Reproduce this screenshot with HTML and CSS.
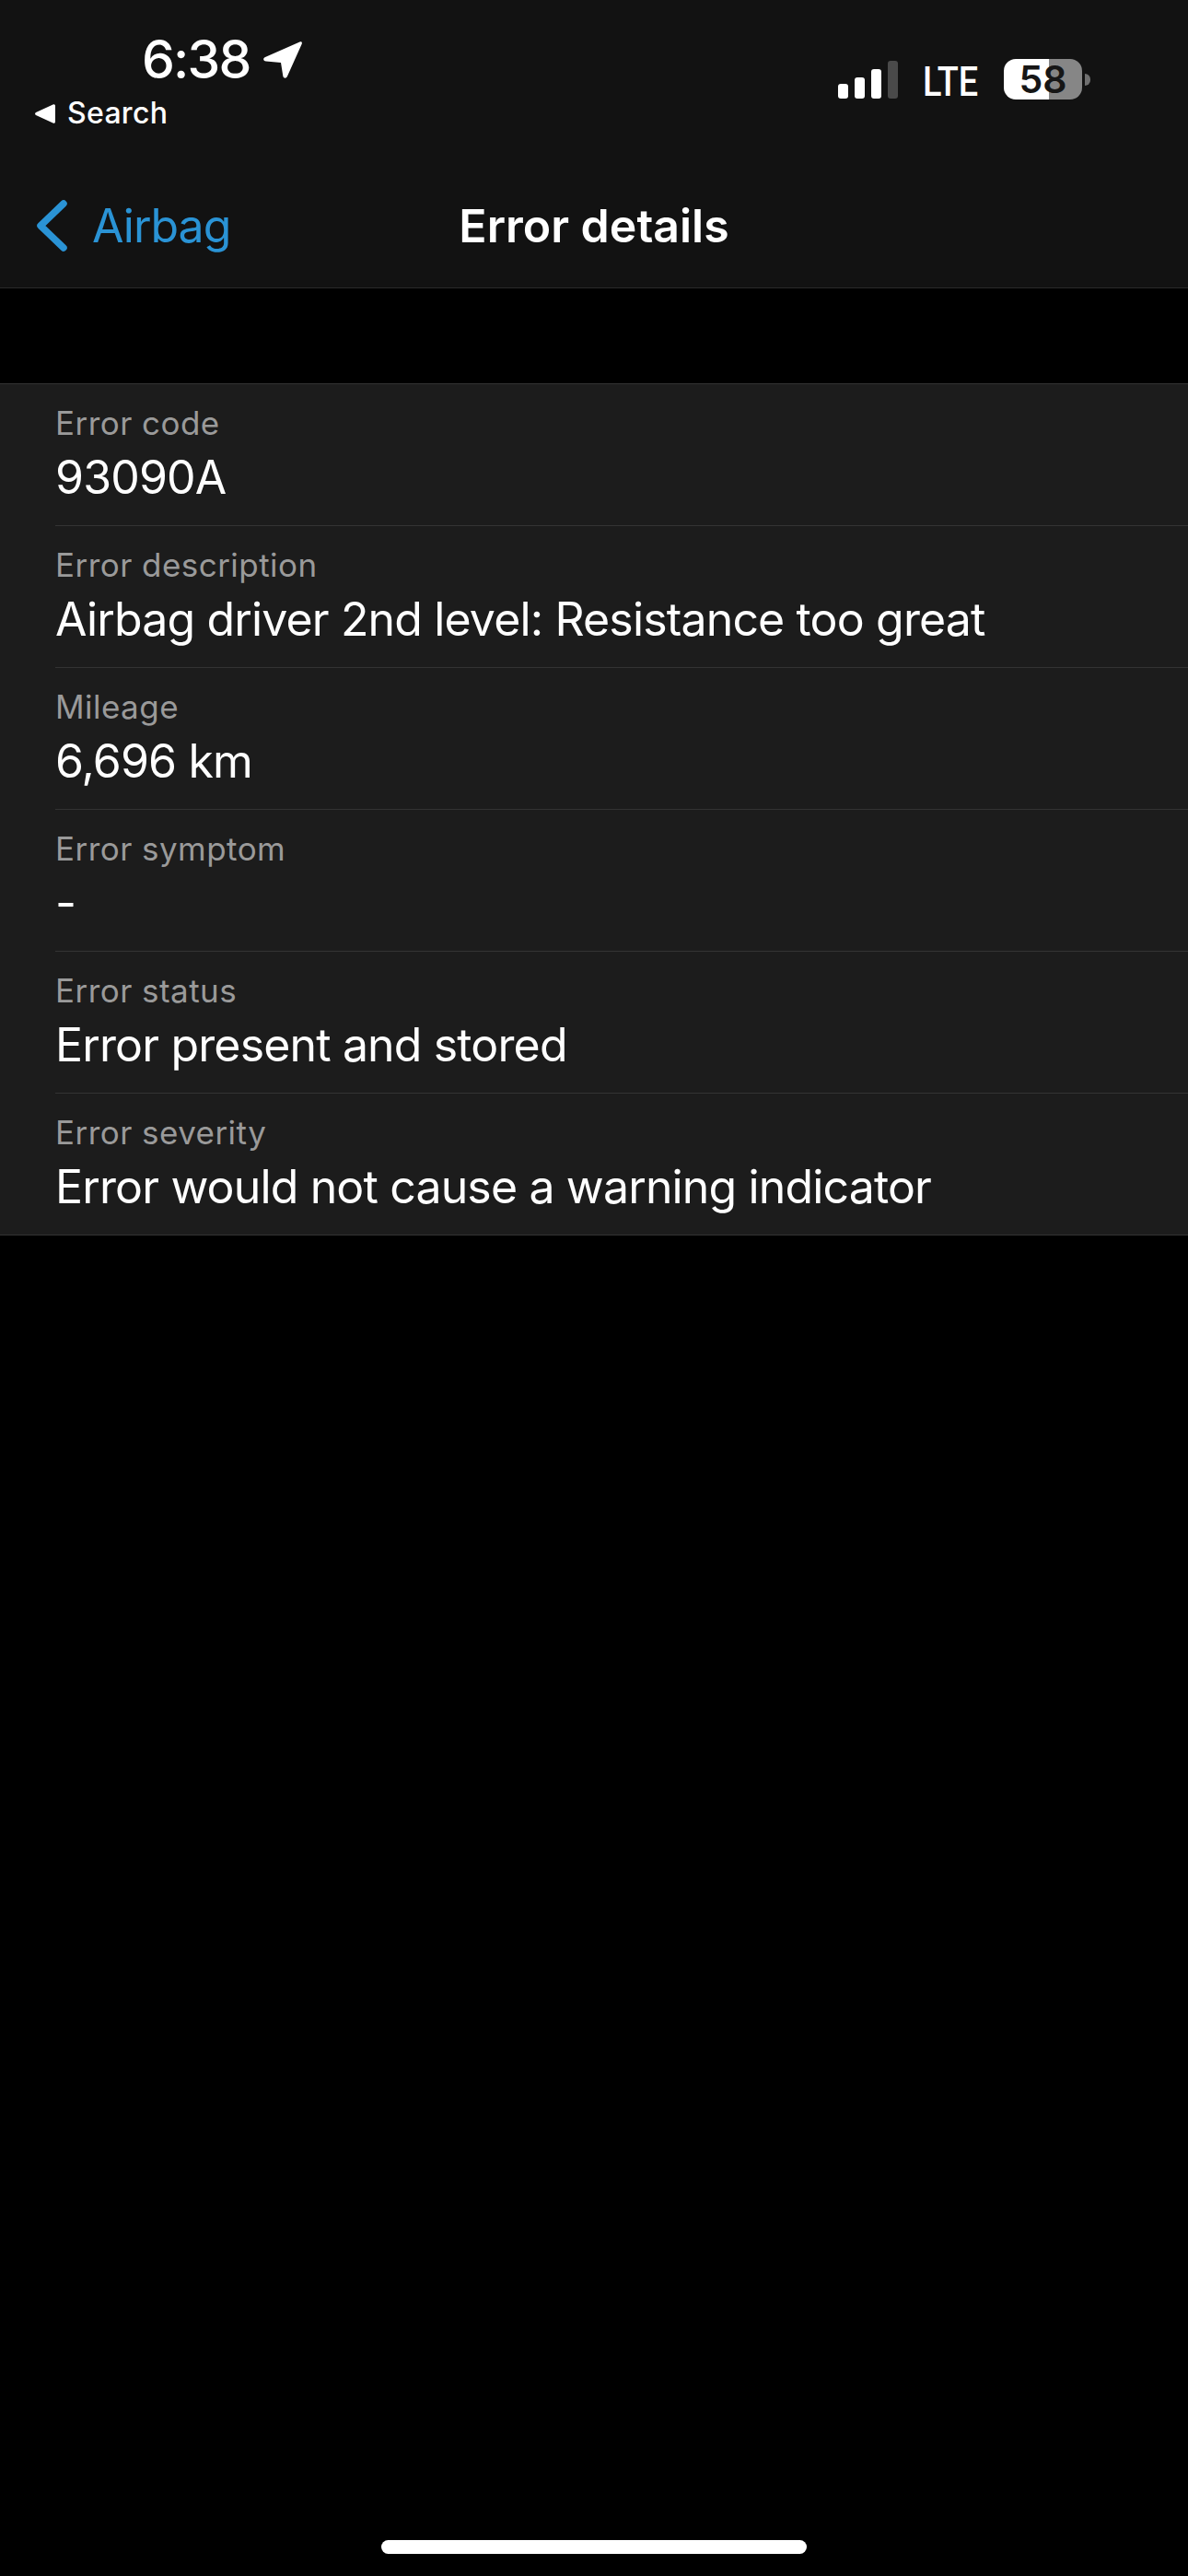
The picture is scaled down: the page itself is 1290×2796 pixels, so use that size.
FILE: index.html
```html
<!DOCTYPE html>
<html lang="en">
<head>
  <meta charset="UTF-8" />
  <meta name="viewport" content="width=device-width, initial-scale=1.0"/>
  <title>Error details</title>
  <link rel="stylesheet" href="styles.css">
</head>
<body>
  <header class="header">
    <div class="status-bar">
      <div class="status-left">
        <div class="time-row">
          <span class="time">6:38</span>
          <svg class="location-icon" viewBox="0 0 42 40" width="42" height="40">
            <path d="M39.5 0.5 C41.5 -0.2 42.3 1 41.7 2.8 L26 37.8 C25 40.4 21.8 40.4 21.3 37.6 L19 23 L2.8 21.6 C-0.3 21.2 -0.8 18.2 2 17 Z" fill="#fff"/>
          </svg>
        </div>
        <div class="search-row">
          <svg class="search-back" viewBox="0 0 22 21" width="22" height="21">
            <path d="M19.5 0.4 C21 -0.3 22 0.5 22 2 L22 19 C22 20.5 21 21.3 19.5 20.6 L1 12 C-0.3 11.3 -0.3 9.7 1 9 Z" fill="#fff"/>
          </svg>
          <span class="search-text">Search</span>
        </div>
      </div>
      <div class="status-right">
        <div class="signal">
          <span class="bar bar-1"></span>
          <span class="bar bar-2"></span>
          <span class="bar bar-3"></span>
          <span class="bar bar-4"></span>
        </div>
        <span class="network">LTE</span>
        <div class="battery">58</div>
        <span class="battery-nub"></span>
      </div>
    </div>

    <nav class="nav-bar">
      <a class="back-link" href="#">
        <svg class="back-icon" viewBox="0 0 33 56" width="33" height="56">
          <path d="M29 4 L4 28 L29 52" fill="none" stroke="#2a93d5" stroke-width="7.5" stroke-linecap="round" stroke-linejoin="round"/>
        </svg>
        <span>Airbag</span>
      </a>
      <h1 class="nav-title">Error details</h1>
    </nav>
  </header>

  <main class="details">
    <div class="detail-row">
      <div class="detail-label">Error code</div>
      <div class="detail-value">93090A</div>
    </div>
    <div class="detail-row">
      <div class="detail-label">Error description</div>
      <div class="detail-value">Airbag driver 2nd level: Resistance too great</div>
    </div>
    <div class="detail-row">
      <div class="detail-label">Mileage</div>
      <div class="detail-value">6,696 km</div>
    </div>
    <div class="detail-row">
      <div class="detail-label">Error symptom</div>
      <div class="detail-value">-</div>
    </div>
    <div class="detail-row">
      <div class="detail-label">Error status</div>
      <div class="detail-value">Error present and stored</div>
    </div>
    <div class="detail-row">
      <div class="detail-label">Error severity</div>
      <div class="detail-value">Error would not cause a warning indicator</div>
    </div>
  </main>

  <div class="home-area">
    <div class="home-indicator"></div>
  </div>
</body>
</html>
```

FILE: styles.css
```css
* {
  box-sizing: border-box;
}

html, body {
  margin: 0;
  padding: 0;
}

body {
  width: 1290px;
  height: 2796px;
  background-color: #000;
  color: #fff;
  font-family: Inter, "Liberation Sans", sans-serif;
  display: flex;
  flex-direction: column;
  overflow: hidden;
}

.header {
  flex: none;
  height: 313px;
  background-color: #121212;
  border-bottom: 1px solid #2a2a2a;
}

/* Status bar */
.status-bar {
  display: flex;
  justify-content: space-between;
  height: 182px;
}

.status-left {
  padding-top: 30px;
  padding-left: 38px;
}

.time-row {
  display: flex;
  align-items: flex-start;
  gap: 14px;
  padding-left: 116px;
  height: 73px;
}

.time {
  font-size: 57px;
  font-weight: 500;
  line-height: 70px;
  letter-spacing: -1.8px;
}

.location-icon {
  margin-top: 15px;
}

.search-row {
  display: flex;
  align-items: center;
  gap: 13px;
}

.search-text {
  font-size: 32px;
  font-weight: 500;
  line-height: 40px;
  letter-spacing: 0.3px;
}

.status-right {
  display: flex;
  align-items: flex-start;
  padding-top: 64px;
  padding-right: 106px;
}

.signal {
  display: flex;
  align-items: flex-end;
  gap: 7px;
  height: 43px;
  margin-right: 27px;
}

.bar {
  width: 11px;
  border-radius: 3px;
  background-color: #fff;
}

.bar-1 { height: 16px; }
.bar-2 { height: 23px; }
.bar-3 { height: 32px; }
.bar-4 { height: 41px; background-color: #4a4a4a; }

.network {
  width: 61px;
  margin-top: 3px;
  margin-right: 27px;
  font-family: Roboto, sans-serif;
  font-size: 45px;
  font-weight: 500;
  line-height: 44px;
  transform: scaleX(0.84);
  transform-origin: left center;
}

.battery {
  width: 85px;
  height: 44px;
  border-radius: 13px;
  background: linear-gradient(to right, #fff 58%, #868686 58%);
  color: #161616;
  font-size: 41px;
  font-weight: 600;
  line-height: 44px;
  text-align: center;
}

.battery-nub {
  width: 6px;
  height: 13px;
  margin-top: 16px;
  margin-left: 3px;
  border-radius: 0 7px 7px 0;
  background-color: #6f6f6f;
}

/* Navigation bar */
.nav-bar {
  position: relative;
  display: flex;
  align-items: center;
  height: 130px;
  padding-left: 40px;
  padding-bottom: 4px;
}

.back-link {
  display: flex;
  align-items: center;
  gap: 27px;
  color: #2a93d5;
  font-size: 50px;
  letter-spacing: -1px;
  text-decoration: none;
}

.nav-title {
  position: absolute;
  left: 0;
  right: 0;
  margin: 0;
  text-align: center;
  font-size: 50px;
  font-weight: 600;
  pointer-events: none;
}

/* Detail list */
.details {
  margin-top: 103px;
  background-color: #1c1c1c;
  border-top: 1px solid #333;
  border-bottom: 1px solid #333;
}

.detail-row {
  height: 154px;
  margin-left: 60px;
  padding-top: 20px;
  border-bottom: 1px solid #333;
}

.detail-row:last-child {
  height: 153px;
  border-bottom: none;
}

.detail-label {
  font-size: 35px;
  line-height: 44px;
  letter-spacing: 0.45px;
  color: #9a9a9a;
}

.detail-value {
  margin-top: 5px;
  font-size: 50px;
  line-height: 64px;
  letter-spacing: -0.85px;
}

/* Home indicator */
.home-area {
  flex: 1;
  display: flex;
  align-items: flex-end;
  justify-content: center;
  padding-bottom: 24px;
}

.home-indicator {
  width: 462px;
  height: 15px;
  border-radius: 8px;
  background-color: #fff;
}
```
